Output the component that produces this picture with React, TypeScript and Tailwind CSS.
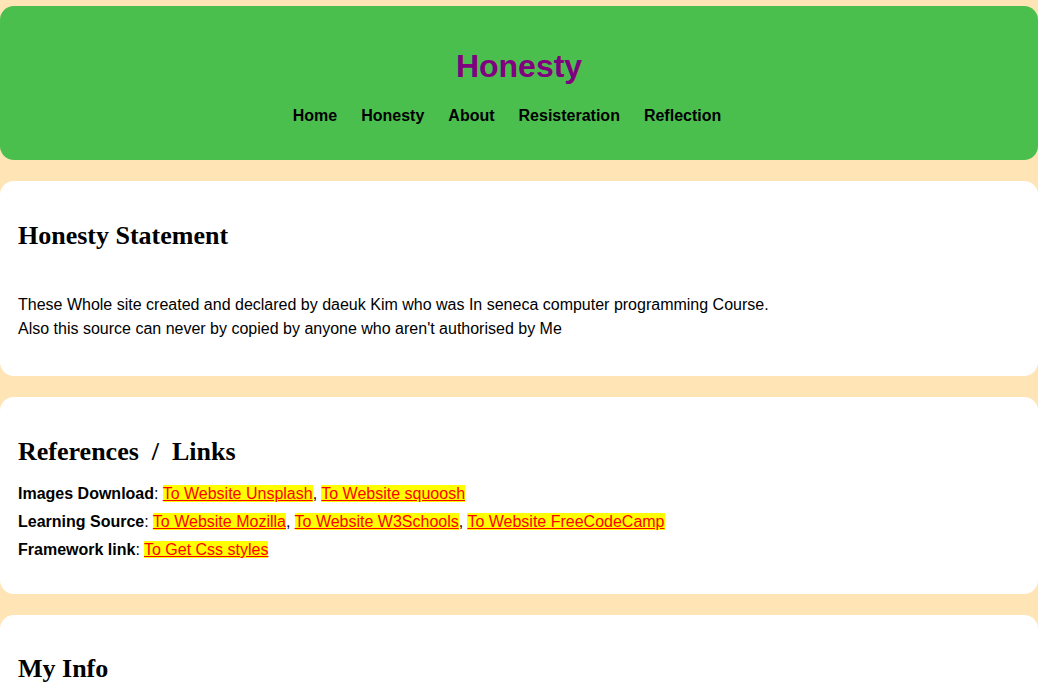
const navItems = ["Home", "Honesty", "About", "Resisteration", "Reflection"];

function Ref({ children }: { children: React.ReactNode }) {
  return (
    <a href="#" className="bg-[#ffff00] text-[#ff0000] underline">
      {children}
    </a>
  );
}

export default function App() {
  return (
    <div className="min-h-screen bg-[#ffe4b5] pt-[6px] font-['Liberation_Sans',Arial,sans-serif] text-black">
      <header className="rounded-[14px] bg-[#4bbf4e] pt-[42px] pb-[34px] text-center">
        <h1 className="text-[32px] leading-[37px] font-bold text-[#800080]">Honesty</h1>
        <nav className="mt-[21px] flex justify-center">
          {navItems.map((item) => (
            <a key={item} href="#" className="pr-6 text-base leading-5 font-bold text-black">
              {item}
            </a>
          ))}
        </nav>
      </header>

      <section className="mt-[21px] rounded-[14px] bg-white px-[18px] pt-[41px] pb-[35px]">
        <h2 className="font-['Liberation_Serif',Cambria,serif] text-[26px] leading-[28px] font-bold">
          Honesty Statement
        </h2>
        <p className="mt-[43px] text-base leading-6">
          These Whole site created and declared by daeuk Kim who was In seneca computer programming Course.
          <br />
          Also this source can never by copied by anyone who aren't authorised by Me
        </p>
      </section>

      <section className="mt-[21px] rounded-[14px] bg-white px-[18px] pt-[41px] pb-[30px]">
        <h2 className="font-['Liberation_Serif',Cambria,serif] text-[26px] leading-[28px] font-bold">
          References{"\u00a0 /\u00a0 "}Links
        </h2>
        <div className="mt-[14px] text-base leading-[28px]">
          <p>
            <b>Images Download</b>: <Ref>To Website Unsplash</Ref>, <Ref>To Website squoosh</Ref>
          </p>
          <p>
            <b>Learning Source</b>: <Ref>To Website Mozilla</Ref>, <Ref>To Website W3Schools</Ref>,{" "}
            <Ref>To Website FreeCodeCamp</Ref>
          </p>
          <p>
            <b>Framework link</b>: <Ref>To Get Css styles</Ref>
          </p>
        </div>
      </section>

      <section className="mt-[21px] rounded-[14px] bg-white px-[18px] pt-[40px] pb-[40px]">
        <h2 className="font-['Liberation_Serif',Cambria,serif] text-[26px] leading-[28px] font-bold">My Info</h2>
      </section>
    </div>
  );
}
